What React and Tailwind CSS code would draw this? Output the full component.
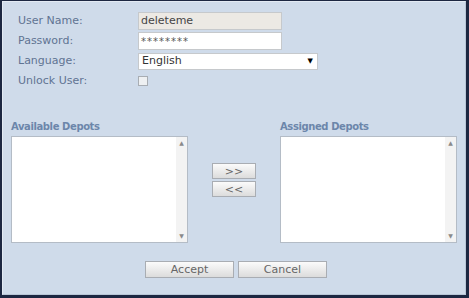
// Edit user dialog — user fields, depot assignment lists, accept/cancel
const FONT = { fontFamily: '"DejaVu Sans", Verdana, sans-serif' };

function Label({ children }) {
  return <span className="w-[120px] shrink-0 text-[11px] text-[#5f7392]">{children}</span>;
}

function ListBox() {
  return (
    <div className="flex h-[107px] w-[177px] border border-[#b4bcc6] bg-white">
      <div className="flex-1" />
      <div className="flex w-[11px] flex-col items-center justify-between bg-[#f3f3f3] py-[3px]">
        <span className="text-[6px] leading-none text-[#8a8a8a]">▲</span>
        <span className="text-[6px] leading-none text-[#8a8a8a]">▼</span>
      </div>
    </div>
  );
}

function Btn({ children, w }) {
  return (
    <button
      className={`${w} flex items-center justify-center border border-[#a9adb3] bg-gradient-to-b from-[#fbfbfb] to-[#dcdcdc] text-[11px] leading-none text-[#666]`}
    >
      {children}
    </button>
  );
}

export default function App() {
  return (
    <div
      style={FONT}
      className="h-[298px] w-[469px] border-b-[3px] border-l-2 border-r-[3px] border-t border-[#1c2741] bg-[#cfdbea]"
    >
      <div className="h-full border border-[#e3eaf3] border-b-[#b9c6d6] border-r-[#b9c6d6]">
        {/* user fields */}
        <div className="flex flex-col pl-[15px] pt-[9px]">
          <div className="flex h-[20px] items-center">
            <Label>User Name:</Label>
            <div className="flex h-[18px] w-[144px] items-center border border-[#c6c9cc] bg-[#ece9e4] px-[2px] text-[11px] text-[#444]">
              deleteme
            </div>
          </div>
          <div className="flex h-[20px] items-center">
            <Label>Password:</Label>
            <div className="flex h-[18px] w-[144px] items-center border border-[#c6c9cc] bg-white px-[2px] text-[10px] tracking-[1px] text-[#555]">
              ********
            </div>
          </div>
          <div className="flex h-[20px] items-center">
            <Label>Language:</Label>
            <div className="flex h-[17px] w-[180px] items-center justify-between border border-[#c6c9cc] bg-white pl-[3px] pr-[4px] text-[11px] text-[#333]">
              <span>English</span>
              <span className="text-[7px] text-black">▼</span>
            </div>
          </div>
          <div className="flex h-[20px] items-center">
            <Label>Unlock User:</Label>
            <div className="h-[10px] w-[10px] border border-[#a8adb3] bg-[#eef0f2]" />
          </div>
        </div>

        {/* depots */}
        <div className="mt-[30px] flex pl-[8px]">
          <div className="flex flex-col">
            <span className="mb-[3px] h-[12px] text-[10px] font-semibold leading-[12px] tracking-[-0.4px] text-[#6c86aa]">
              Available Depots
            </span>
            <ListBox />
          </div>
          <div className="ml-[24px] mt-[42px] flex flex-col gap-[2px]">
            <Btn w="h-[16px] w-[44px]">&gt;&gt;</Btn>
            <Btn w="h-[16px] w-[44px]">&lt;&lt;</Btn>
          </div>
          <div className="ml-[24px] flex flex-col">
            <span className="mb-[3px] h-[12px] text-[10px] font-semibold leading-[12px] tracking-[-0.4px] text-[#6c86aa]">
              Assigned Depots
            </span>
            <ListBox />
          </div>
        </div>

        {/* actions */}
        <div className="mt-[18px] flex gap-[4px] pl-[142px]">
          <Btn w="h-[17px] w-[89px]">Accept</Btn>
          <Btn w="h-[17px] w-[89px]">Cancel</Btn>
        </div>
      </div>
    </div>
  );
}
